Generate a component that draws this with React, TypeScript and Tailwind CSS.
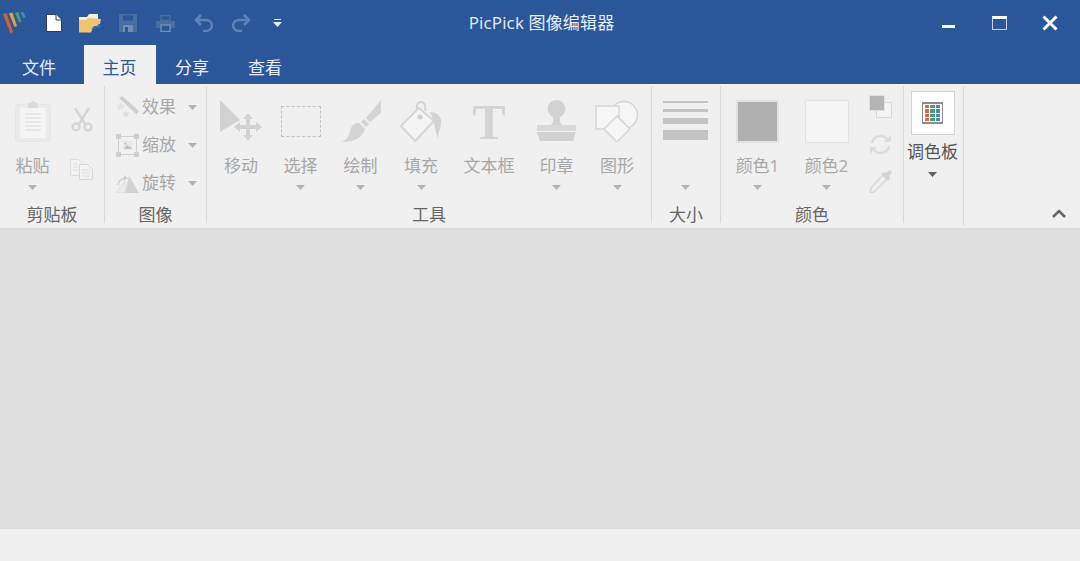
import { ReactNode } from "react";

const FONT = "font-['Open_Sans','Noto_Sans_CJK_SC',sans-serif]";

const Caret = ({ dark = false }: { dark?: boolean }) => (
  <svg width="9" height="5" viewBox="0 0 9 5" className="block">
    <path d="M0 0h9L4.5 5z" fill={dark ? "#606060" : "#b4b4b4"} />
  </svg>
);

// one big ribbon button: icon, label, optional caret
const Tool = ({ w, label, icon, caret = true }: { w: number; label: string; icon: ReactNode; caret?: boolean }) => (
  <div className="flex flex-col items-center pt-[14px]" style={{ width: w }}>
    <div className="h-[44px] flex items-start justify-center">{icon}</div>
    <div className="mt-[10px] h-[24px] leading-[24px] text-[17px] text-[#a8a8a8] whitespace-nowrap">{label}</div>
    {caret && (
      <div className="mt-[7px]">
        <Caret />
      </div>
    )}
  </div>
);

const Group = ({ w, label, children }: { w: number; label: string; children: ReactNode }) => (
  <div className="h-[137px] flex flex-col border-r border-[#d9d9d9] shrink-0" style={{ width: w }}>
    <div className="flex-1 flex min-h-0">{children}</div>
    <div className="h-[20px] leading-[24px] text-center text-[17px] text-[#666666] whitespace-nowrap">{label}</div>
  </div>
);

const SmallRow = ({ label, icon }: { label: string; icon: ReactNode }) => (
  <div className="h-[38px] flex items-center">
    <div className="w-[23px] ml-[11px] flex justify-center">{icon}</div>
    <div className="ml-[3px] w-[34px] text-[17px] text-[#a8a8a8] whitespace-nowrap">{label}</div>
    <div className="ml-[12px]">
      <Caret />
    </div>
  </div>
);

const Logo = () => (
  <svg width="23" height="22" viewBox="0 0 23 22">
    <path d="M0 2l3.500-1L10 20l-2.500 1.500z" fill="#d4603a" />
    <path d="M6 1.500l3.500-1L14 14l-2.500 1z" fill="#d9a441" />
    <path d="M12 1l3.500-1 3 9.500-2.500 1z" fill="#4f9a6e" />
    <path d="M17.500 .5L20.500 0l2 5-2.500 1z" fill="#4a86c5" />
  </svg>
);

const NewFile = () => (
  <svg width="16" height="18" viewBox="0 0 16 18">
    <path d="M.5 .5h9.500l5.500 5.500v11.500h-15z" fill="#ffffff" stroke="#30395a" strokeWidth="1" />
    <path d="M10 .5v5.500h5.500" fill="#ffffff" stroke="#30395a" strokeWidth="1" />
  </svg>
);

const OpenFolder = () => (
  <svg width="23" height="19" viewBox="0 0 23 19">
    <path d="M0 3h8l2-3h9v12H0z" fill="#f5f0e0" />
    <path d="M0 18.500V6h7l2-2 13 1-1 5-6 2-3 6.500z" fill="#f0c36e" />
    <path d="M13.500 16a5 4 0 0 1 7.500-3" fill="none" stroke="#3a6ea8" strokeWidth="2" />
    <path d="M19 10l3.500 3-4.500 1z" fill="#3a6ea8" />
  </svg>
);

const SaveIcon = () => (
  <svg width="18" height="18" viewBox="0 0 18 18">
    <path d="M0 0h18v18H0z" fill="#486f9f" />
    <path d="M4 1.500h10v5H4z" fill="#2b579a" />
    <path d="M4 11h10v7H4z" fill="#6f8fb8" />
    <path d="M6 13h3v5H6z" fill="#2b579a" />
  </svg>
);

const PrintIcon = () => (
  <svg width="19" height="17" viewBox="0 0 19 17">
    <path d="M5 .5h9v5H5z" fill="none" stroke="#486f9f" strokeWidth="1.500" />
    <path d="M0 6h19v7H0z" fill="#486f9f" />
    <path d="M5 10h9v6.500H5z" fill="#2b579a" stroke="#6f8fb8" strokeWidth="1.500" />
  </svg>
);

const Undo = ({ flip = false }: { flip?: boolean }) => (
  <svg width="20" height="18" viewBox="0 0 20 18" className={flip ? "-scale-x-100" : ""}>
    <path d="M7 1L2 6l5 5" fill="none" stroke="#5f84b3" strokeWidth="2.500" />
    <path d="M2 6h10a6 5.500 0 0 1 0 11H9" fill="none" stroke="#5f84b3" strokeWidth="2.500" />
  </svg>
);

const Paste = () => (
  <svg width="36" height="42" viewBox="0 0 36 42" className="block">
    <rect x="0.500" y="4.500" width="35" height="37" rx="3" fill="#ebebeb" stroke="#e6e6e6" />
    <rect x="5" y="8" width="26" height="30" fill="#f5f5f5" />
    <path d="M13 3h3a2 2 0 0 1 4 0h3v5H13z" fill="#dcdcdc" />
    <path d="M10 14h16M10 18h16M10 22h16M10 26h16M10 30h16" stroke="#e2e2e2" strokeWidth="1.500" />
  </svg>
);

const Scissors = () => (
  <svg width="22" height="24" viewBox="0 0 22 24" className="block">
    <path d="M4 0l10 16M18 0L8 16" stroke="#d6d6d6" strokeWidth="2.500" fill="none" />
    <circle cx="5" cy="19" r="3.500" fill="none" stroke="#d6d6d6" strokeWidth="2.500" />
    <circle cx="17" cy="19" r="3.500" fill="none" stroke="#d6d6d6" strokeWidth="2.500" />
  </svg>
);

const CopyDoc = () => (
  <svg width="23" height="21" viewBox="0 0 23 21" className="block">
    <path d="M.5 .5h8l3 3v13h-11z" fill="#f3f3f3" stroke="#dedede" />
    <path d="M9.500 5.500h8l5 5v10h-13z" fill="#f3f3f3" stroke="#d8d8d8" />
    <path d="M12 11h8M12 14h8M12 17h8M3 5h5M3 8h5M3 11h5" stroke="#dedede" />
  </svg>
);

const Wand = () => (
  <svg width="23" height="23" viewBox="0 0 23 23">
    <path d="M3 2l3-2 17 15-2.500 3.500z" fill="#d0d0d0" />
    <path d="M5 6l1.400 2.800 3 .4-2.200 2.200.6 3L5 13l-2.800 1.400.6-3L.6 9.200l3-.4z" fill="#e4e4e4" />
    <path d="M10 14l1.200 2.400 2.600.4-1.900 1.900.4 2.700-2.300-1.300-2.300 1.300.4-2.700-1.900-1.900 2.600-.4z" fill="#e0e0e0" />
  </svg>
);

const Resize = () => (
  <svg width="23" height="23" viewBox="0 0 23 23">
    <path d="M2.500 2.500h18v18h-18z" fill="none" stroke="#d0d0d0" />
    <path d="M0 0h5v5H0zM18 0h5v5h-5zM0 18h5v5H0zM18 18h5v5h-5z" fill="#cecece" />
    <path d="M7 7h9v9H7z" fill="#e8e8e8" />
    <path d="M8 15l3-4 2 2 1-1 2 3z" fill="#c0c0c0" />
    <circle cx="9.500" cy="9.500" r="1" fill="#c0c0c0" />
  </svg>
);

const Rotate = () => (
  <svg width="23" height="19" viewBox="0 0 23 19">
    <path d="M13 2l10 17H9z" fill="#d2d2d2" />
    <path d="M0 19L9 7v12z" fill="#ececec" stroke="#dedede" />
    <path d="M2 11a8 8 0 0 1 8-7" fill="none" stroke="#d0d0d0" strokeWidth="1.500" />
    <path d="M8 1l4 3-4 3z" fill="#d0d0d0" />
  </svg>
);

const MoveIcon = () => (
  <svg width="42" height="42" viewBox="0 0 42 42" className="block">
    <path d="M0 0l20 20-20 12z" fill="#d2d2d2" />
    <path d="M28 13l5 6h-3v6h6v-3l6 5-6 5v-3h-6v6h3l-5 6-5-6h3v-6h-6v3l-6-5 6-5v3h6v-6h-3z" fill="#d2d2d2" />
  </svg>
);

const SelectRect = () => (
  <div className="mt-[6px] w-[40px] h-[31px] border border-dashed border-[#c2c2c2]" />
);

const Brush = () => (
  <svg width="40" height="42" viewBox="0 0 40 42" className="block">
    <path d="M40 0v13L29 22l-4-4z" fill="#d4d4d4" />
    <path d="M23 19l5 5-3 3-5-5z" fill="#d4d4d4" />
    <path d="M18 23l6 6c-2 7-8 13-24 13 6-2 8-6 9-11 1-5 4-8 9-8z" fill="#d4d4d4" />
  </svg>
);

const Bucket = () => (
  <svg width="42" height="42" viewBox="0 0 42 42" className="block">
    <path d="M17 13v-7a4 4 0 0 1 8 0l.5 5" fill="none" stroke="#d2d2d2" strokeWidth="2" />
    <path d="M19 8L1 26l14 15 19-20z" fill="#f4f4f4" stroke="#d6d6d6" strokeWidth="2" strokeLinejoin="round" />
    <circle cx="20" cy="17" r="2.500" fill="#cfcfcf" />
    <path d="M30 12c6 0 12 4 11 10 0 6-3 9-3 17-2-5-3-11-4-18z" fill="#d2d2d2" />
  </svg>
);

const Stamp = () => (
  <svg width="39" height="41" viewBox="0 0 39 41" className="block">
    <circle cx="19.500" cy="9" r="9" fill="#d2d2d2" />
    <path d="M16 16h7v6l2 3H14l2-3z" fill="#d2d2d2" />
    <path d="M0 25h39v6H0z" fill="#d8d8d8" />
    <path d="M0 32h39l-3 9H3z" fill="#d2d2d2" />
  </svg>
);

const Shapes = () => (
  <svg width="44" height="42" viewBox="0 0 44 42" className="block">
    <circle cx="29" cy="15" r="13.500" fill="#f6f6f6" stroke="#d6d6d6" strokeWidth="1.500" />
    <path d="M1 6h23v23H1z" fill="#f6f6f6" stroke="#d6d6d6" strokeWidth="1.500" />
    <path d="M22 16l13 13-13 13L9 29z" fill="#f6f6f6" stroke="#d6d6d6" strokeWidth="1.500" />
  </svg>
);

const SizeLines = () => (
  <div className="w-[45px] flex flex-col mt-[1px]">
    <div className="h-[2px] bg-[#c4c4c4]" />
    <div className="h-[3px] mt-[6px] bg-[#c4c4c4]" />
    <div className="h-[6px] mt-[6px] bg-[#c4c4c4]" />
    <div className="h-[10px] mt-[6px] bg-[#c4c4c4]" />
  </div>
);

const FgBg = () => (
  <svg width="23" height="23" viewBox="0 0 23 23" className="block">
    <path d="M7.500 7.500h15v15h-15z" fill="#f4f4f4" stroke="#d8d8d8" />
    <path d="M.5 .5h15v15H.5z" fill="#b4b4b4" stroke="#e2e2e2" />
  </svg>
);

const SwapIcon = () => (
  <svg width="23" height="21" viewBox="0 0 23 21" className="block">
    <path d="M3 9a8.500 8 0 0 1 15-4" fill="none" stroke="#dcdcdc" strokeWidth="2.500" />
    <path d="M20 12a8.500 8 0 0 1-15 4" fill="none" stroke="#dcdcdc" strokeWidth="2.500" />
    <path d="M15 8h7V1zM8 13H1v7z" fill="#dcdcdc" />
  </svg>
);

const Dropper = () => (
  <svg width="23" height="23" viewBox="0 0 23 23" className="block">
    <path d="M14 5l4 4L5 22l-4 1 1-5z" fill="#f0f0f0" stroke="#d8d8d8" strokeWidth="1.500" />
    <path d="M12 4l7 7 2-3-1-2 2-2a2 2 0 0 0-3-3l-2 2-2-1z" fill="#d4d4d4" />
  </svg>
);

const PaletteIcon = () => {
  const cols = ["#e0654a", "#4f9a6e", "#4a86c5"];
  return (
    <div className="w-[21px] h-[22px] bg-white border-t-2 border-b-2 border-x border-[#8c8c8c] grid grid-cols-3 gap-x-[1px] gap-y-[1px] px-[2px] py-[1px]">
      {Array.from({ length: 12 }).map((_, i) => (
        <div key={i} style={{ background: cols[i % 3] }} />
      ))}
    </div>
  );
};

export default function App() {
  return (
    <div className={`w-[1080px] h-[561px] flex flex-col bg-[#f0f0f0] overflow-hidden ${FONT}`}>
      {/* title bar */}
      <div className="h-[45px] bg-[#2b579a] flex shrink-0">
        <div className="w-[300px] flex items-start">
          <div className="ml-[3px] mt-[12px]"><Logo /></div>
          <div className="ml-[20px] mt-[14px]"><NewFile /></div>
          <div className="ml-[17px] mt-[14px]"><OpenFolder /></div>
          <div className="ml-[17px] mt-[14px]"><SaveIcon /></div>
          <div className="ml-[19px] mt-[15px]"><PrintIcon /></div>
          <div className="ml-[19px] mt-[14px]"><Undo /></div>
          <div className="ml-[17px] mt-[14px]"><Undo flip /></div>
          <div className="ml-[22px] mt-[19px]">
            <svg width="9" height="8" viewBox="0 0 9 8">
              <path d="M1 0h7v1H1zM0 3h9L4.500 8z" fill="#e8eef6" />
            </svg>
          </div>
        </div>
        <div className="flex-1 text-center pl-[3px] pt-[10px] leading-[26px] text-[17px] tracking-[0.15px] text-[#e6ecf5] whitespace-nowrap">
          PicPick 图像编辑器
        </div>
        <div className="w-[300px] flex items-start">
          <div className="ml-[162px] mt-[25px] w-[13px] h-[3px] bg-white" />
          <div className="ml-[37px] mt-[16px] w-[15px] h-[14px] border border-[#c8d4e6] border-t-[3px] border-t-white" />
          <svg width="16" height="16" viewBox="0 0 16 16" className="ml-[35px] mt-[15px]">
            <path d="M1.500 1.500l13 13M14.500 1.500l-13 13" stroke="#ffffff" strokeWidth="3" />
          </svg>
        </div>
      </div>

      {/* tabs */}
      <div className="h-[39px] bg-[#2b579a] flex shrink-0 text-[17px] text-[#e6ecf5]">
        <div className="w-[72px] ml-[3px] mr-[9px] pt-[11px] leading-[24px] text-center">文件</div>
        <div className="w-[72px] pt-[11px] pr-[1px] leading-[24px] text-center bg-[#f0f0f0] text-[#2b579a]">主页</div>
        <div className="w-[72px] pt-[11px] leading-[24px] text-center">分享</div>
        <div className="w-[72px] ml-[1px] pt-[11px] leading-[24px] text-center">查看</div>
      </div>

      {/* ribbon */}
      <div className="h-[145px] pt-[2px] flex border-b border-[#d9d9d9] shrink-0">
        <Group w={105} label="剪贴板">
          <div className="w-[65px]">
            <Tool w={65} label="粘贴" icon={<Paste />} />
          </div>
          <div className="flex flex-col items-start">
            <div className="ml-[6px] mt-[22px]"><Scissors /></div>
            <div className="ml-[5px] mt-[27px]"><CopyDoc /></div>
          </div>
        </Group>
        <Group w={102} label="图像">
          <div className="pt-[2px]">
            <SmallRow label="效果" icon={<Wand />} />
            <SmallRow label="缩放" icon={<Resize />} />
            <SmallRow label="旋转" icon={<Rotate />} />
          </div>
        </Group>
        <Group w={445} label="工具">
          <div className="w-[4px]" />
          <Tool w={60} label="移动" icon={<MoveIcon />} caret={false} />
          <Tool w={59} label="选择" icon={<SelectRect />} />
          <Tool w={61} label="绘制" icon={<Brush />} />
          <Tool w={60} label="填充" icon={<Bucket />} />
          <Tool w={76} label="文本框" caret={false} icon={<div className="font-['Liberation_Serif',serif] font-bold text-[50px] leading-[44px] text-[#d4d4d4]">T</div>} />
          <Tool w={59} label="印章" icon={<Stamp />} />
          <Tool w={62} label="图形" icon={<Shapes />} />
        </Group>
        <Group w={69} label="大小">
          <Tool w={66} label="" icon={<SizeLines />} />
        </Group>
        <Group w={183} label="颜色">
          <div className="w-[9px]" />
          <Tool
            w={55}
            label="颜色1"
            icon={<div className="w-[43px] h-[43px] border-2 border-[#e2e2e2] bg-[#b0b0b0]" />}
          />
          <div className="w-[14px]" />
          <Tool
            w={55}
            label="颜色2"
            icon={<div className="w-[44px] h-[43px] border border-[#e2e2e2] bg-[#f5f5f5]" />}
          />
          <div className="flex flex-col ml-[15px] pt-[9px]">
            <FgBg />
            <div className="mt-[16px]"><SwapIcon /></div>
            <div className="mt-[15px]"><Dropper /></div>
          </div>
        </Group>
        <div className="w-[60px] h-[140px] border-r border-[#d9d9d9] flex flex-col items-center pr-[2px] shrink-0">
          <div className="mt-[5px] w-[44px] h-[44px] bg-white border border-[#d4d4d4] flex items-center justify-center">
            <PaletteIcon />
          </div>
          <div className="mt-[5px] h-[24px] leading-[24px] text-[17px] text-[#555555] whitespace-nowrap">调色板</div>
          <div className="mt-[8px]"><Caret dark /></div>
        </div>
        <div className="flex-1 flex justify-end items-start">
          <svg width="14" height="9" viewBox="0 0 14 9" className="mt-[123px] mr-[14px]">
            <path d="M1 8l6-6 6 6" fill="none" stroke="#666666" strokeWidth="2.500" />
          </svg>
        </div>
      </div>

      {/* canvas */}
      <div className="h-[300px] bg-[#dedede] shrink-0" />
      <div className="flex-1 bg-[#f0f0f0]" />
    </div>
  );
}
